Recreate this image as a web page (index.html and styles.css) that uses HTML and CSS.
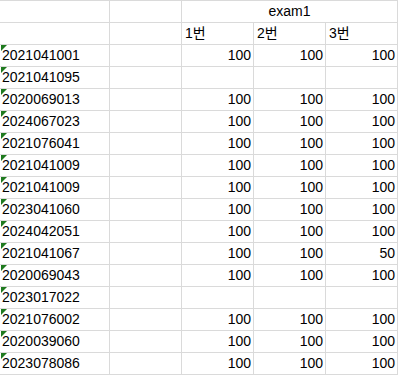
FILE: index.html
```html
<!DOCTYPE html>
<html lang="ko">
<head>
<meta charset="utf-8">
<title>exam1</title>
<link rel="stylesheet" href="styles.css">
</head>
<body>
<div class="sheet">
  <div class="cell"></div>
  <div class="cell"></div>
  <div class="cell merged">exam1</div>

  <div class="cell"></div>
  <div class="cell"></div>
  <div class="cell head">1번</div>
  <div class="cell head">2번</div>
  <div class="cell head">3번</div>

  <div class="cell id">2021041001</div><div class="cell"></div><div class="cell num">100</div><div class="cell num">100</div><div class="cell num">100</div>
  <div class="cell id">2021041095</div><div class="cell"></div><div class="cell num"></div><div class="cell num"></div><div class="cell num"></div>
  <div class="cell id">2020069013</div><div class="cell"></div><div class="cell num">100</div><div class="cell num">100</div><div class="cell num">100</div>
  <div class="cell id">2024067023</div><div class="cell"></div><div class="cell num">100</div><div class="cell num">100</div><div class="cell num">100</div>
  <div class="cell id">2021076041</div><div class="cell"></div><div class="cell num">100</div><div class="cell num">100</div><div class="cell num">100</div>
  <div class="cell id">2021041009</div><div class="cell"></div><div class="cell num">100</div><div class="cell num">100</div><div class="cell num">100</div>
  <div class="cell id">2021041009</div><div class="cell"></div><div class="cell num">100</div><div class="cell num">100</div><div class="cell num">100</div>
  <div class="cell id">2023041060</div><div class="cell"></div><div class="cell num">100</div><div class="cell num">100</div><div class="cell num">100</div>
  <div class="cell id">2024042051</div><div class="cell"></div><div class="cell num">100</div><div class="cell num">100</div><div class="cell num">100</div>
  <div class="cell id">2021041067</div><div class="cell"></div><div class="cell num">100</div><div class="cell num">100</div><div class="cell num">50</div>
  <div class="cell id">2020069043</div><div class="cell"></div><div class="cell num">100</div><div class="cell num">100</div><div class="cell num">100</div>
  <div class="cell id">2023017022</div><div class="cell"></div><div class="cell num"></div><div class="cell num"></div><div class="cell num"></div>
  <div class="cell id">2021076002</div><div class="cell"></div><div class="cell num">100</div><div class="cell num">100</div><div class="cell num">100</div>
  <div class="cell id">2020039060</div><div class="cell"></div><div class="cell num">100</div><div class="cell num">100</div><div class="cell num">100</div>
  <div class="cell id">2023078086</div><div class="cell"></div><div class="cell num">100</div><div class="cell num">100</div><div class="cell num">100</div>
</div>
</body>
</html>
```

FILE: styles.css
```css
html, body {
  margin: 0;
  padding: 0;
  background: #ffffff;
}

.sheet {
  display: grid;
  grid-template-columns: 109px 71px 71px 71px 71px;
  grid-auto-rows: 21px;
  gap: 1px;
  padding: 1px 1px 1px 0;
  width: max-content;
  background: #dadada;
  font-family: "Liberation Sans", "Noto Sans CJK KR", sans-serif;
  font-size: 14px;
  line-height: 21px;
  color: #000000;
}

.cell {
  background: #ffffff;
  white-space: nowrap;
  overflow: hidden;
  position: relative;
}

.merged {
  grid-column: span 3;
  text-align: center;
}

.head {
  padding-left: 3px;
}

.id {
  padding-left: 2px;
}

.id::before {
  content: "";
  position: absolute;
  left: 1px;
  top: 0;
  width: 0;
  height: 0;
  border-top: 6px solid #1f7a1f;
  border-right: 6px solid transparent;
}

.num {
  text-align: right;
  padding-right: 2px;
}
```
